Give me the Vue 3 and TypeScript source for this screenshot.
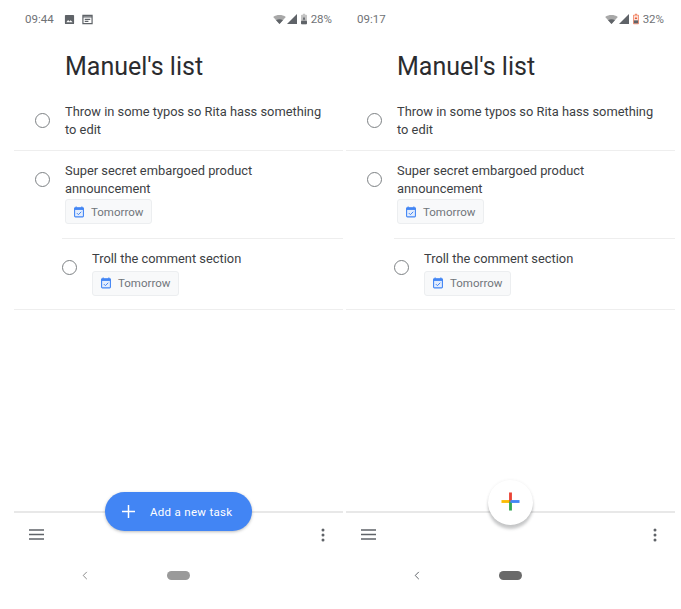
<script setup lang="ts">
interface Task {
  id: number
  lines: string[]
  due?: string
  sub?: boolean
}

interface Phone {
  id: number
  time: string
  percent: string
  notifications: boolean
  charging: boolean
  extended: boolean
  pillDark: boolean
}

const tasks: Task[] = [
  { id: 1, lines: ['Throw in some typos so Rita hass something', 'to edit'] },
  { id: 2, lines: ['Super secret embargoed product', 'announcement'], due: 'Tomorrow' },
  { id: 3, lines: ['Troll the comment section'], due: 'Tomorrow', sub: true },
]

const phones: Phone[] = [
  { id: 1, time: '09:44', percent: '28%', notifications: true, charging: false, extended: true, pillDark: false },
  { id: 2, time: '09:17', percent: '32%', notifications: false, charging: true, extended: false, pillDark: true },
]
</script>

<template>
  <div class="page">
    <section v-for="phone in phones" :key="phone.id" class="phone">
      <header class="status">
        <span class="time">{{ phone.time }}</span>
        <template v-if="phone.notifications">
          <svg class="note note-first" viewBox="0 0 12 12">
            <rect x="1" y="1" width="10" height="10" rx="1" fill="#5f6368" />
            <path d="M2.5 9l2-2.5 1.5 1.6 1.2-1.2L9.5 9z" fill="#fff" />
          </svg>
          <svg class="note" viewBox="0 0 12 12">
            <path d="M1 1.5h10v9H1z" fill="none" stroke="#5f6368" stroke-width="1.3" />
            <path d="M1 3.2h10M3 5.8h6M3 8h4" stroke="#5f6368" stroke-width="1.3" />
          </svg>
        </template>
        <span class="status-right">
          <svg class="wifi" viewBox="0 0 14 10">
            <path d="M0 2.2C4-.7 10-.7 14 2.2L7 10z" fill="#a8a8a8" />
            <path d="M3.2 5.9c2.3-1.5 5.3-1.5 7.6 0L7 10z" fill="#5f6368" />
          </svg>
          <svg class="signal" viewBox="0 0 11 11">
            <path d="M11 0v11H0z" fill="#5f6368" />
          </svg>
          <svg v-if="phone.charging" class="battery" viewBox="0 0 7 12">
            <path d="M2.2 0h2.6v1H6a1 1 0 0 1 1 1v9a1 1 0 0 1-1 1H1a1 1 0 0 1-1-1V2a1 1 0 0 1 1-1h1.2z" fill="#f28b6c" />
            <rect x="1" y="2" width="5" height="9" fill="#fbe0d8" />
            <rect x="1" y="7.6" width="5" height="3.4" fill="#5f6368" />
            <path d="M3.5 3.4 5 6H2z" fill="#e8552f" />
          </svg>
          <svg v-else class="battery" viewBox="0 0 7 12">
            <path d="M2.2 0h2.6v1H6a1 1 0 0 1 1 1v9a1 1 0 0 1-1 1H1a1 1 0 0 1-1-1V2a1 1 0 0 1 1-1h1.2z" fill="#c4c4c4" />
            <rect x="0" y="8" width="7" height="4" rx="1" fill="#5f6368" />
            <path d="M3.5 3 5 6.5H4v1H3v-1H2z" fill="#5f6368" />
          </svg>
          <span class="percent">{{ phone.percent }}</span>
        </span>
      </header>

      <h1 class="title">Manuel's list</h1>

      <ul class="tasks">
        <li v-for="task in tasks" :key="task.id" class="task" :class="{ 'task-sub': task.sub, 'task-dated': task.due }">
          <span class="check"></span>
          <div class="task-body">
            <p v-for="line in task.lines" :key="line" class="task-line">{{ line }}</p>
            <div v-if="task.due" class="chip">
              <svg class="chip-icon" viewBox="0 0 12 13">
                <path d="M2.6 0v1.6M9.4 0v1.6" stroke="#4285f4" stroke-width="1.4" />
                <rect x="0.7" y="1.4" width="10.6" height="10.9" rx="1" fill="#e3edfd" stroke="#4285f4" stroke-width="1.3" />
                <rect x="0.7" y="1.4" width="10.6" height="2.6" fill="#4285f4" />
                <path d="M3.4 7.8l1.9 1.9 3.4-3.5" fill="none" stroke="#4285f4" stroke-width="1.2" />
              </svg>
              <span>{{ task.due }}</span>
            </div>
          </div>
        </li>
      </ul>

      <footer class="bar">
        <button v-if="phone.extended" class="fab-wide">
          <svg class="fab-plus" viewBox="0 0 14 14">
            <path d="M7 0v14M0 7h14" stroke="#fff" stroke-width="1.6" />
          </svg>
          <span>Add a new task</span>
        </button>
        <button v-else class="fab-round">
          <svg class="fab-colors" viewBox="0 0 20 20">
            <path d="M10 10H0.5" stroke="#fbbc04" stroke-width="3" />
            <path d="M10 10V0.5" stroke="#ea4335" stroke-width="3" />
            <path d="M10 10v9.5" stroke="#34a853" stroke-width="3" />
            <path d="M10 10h9.5" stroke="#4285f4" stroke-width="3" />
          </svg>
        </button>
        <svg class="menu" viewBox="0 0 15 11">
          <path d="M0 1h15M0 5.5h15M0 10h15" stroke="#5f6368" stroke-width="1.4" />
        </svg>
        <svg class="dots" viewBox="0 0 4 14">
          <circle cx="2" cy="2" r="1.5" fill="#5f6368" />
          <circle cx="2" cy="7" r="1.5" fill="#5f6368" />
          <circle cx="2" cy="12" r="1.5" fill="#5f6368" />
        </svg>
      </footer>

      <nav class="nav">
        <svg class="back" viewBox="0 0 6 10">
          <path d="M5 1 1 5l4 4" fill="none" :stroke="phone.pillDark ? '#5f6368' : '#8a8a8a'" stroke-width="1.1" />
        </svg>
        <span class="pill" :class="{ 'pill-dark': phone.pillDark }"></span>
      </nav>
    </section>
  </div>
</template>

<style>
html,
body {
  margin: 0;
  background: #fff;
}
</style>

<style scoped>
.page {
  display: flex;
  gap: 3px;
  width: 681px;
  height: 609px;
  padding-left: 14px;
  box-sizing: border-box;
  overflow: hidden;
  background: #fff;
  font-family: Roboto, "Liberation Sans", sans-serif;
}

.phone {
  display: flex;
  flex-direction: column;
  width: 329px;
  height: 609px;
}

.status {
  display: flex;
  align-items: center;
  height: 38px;
  padding: 0 11px;
  box-sizing: border-box;
  color: #6f7276;
  font-size: 11.5px;
}

.note {
  width: 11px;
  height: 11px;
  margin-left: 7px;
}

.note-first {
  margin-left: 10px;
}

.status-right {
  display: flex;
  align-items: center;
  margin-left: auto;
}

.wifi {
  width: 13px;
  height: 9px;
}

.signal {
  width: 10px;
  height: 10px;
  margin-left: 1px;
}

.battery {
  width: 6px;
  height: 12px;
  margin-left: 4px;
}

.percent {
  margin-left: 4px;
}

.title {
  margin: 12px 0 0 51px;
  color: #2b2c2f;
  font-size: 25px;
  font-weight: 400;
  line-height: 34px;
}

.tasks {
  flex: 1;
  margin: 0;
  padding: 0;
  padding-top: 9px;
  list-style: none;
}

.task {
  display: flex;
  align-items: flex-start;
  padding: 10px 0 12px;
  border-bottom: 1px solid #eeeeee;
}

.task-dated {
  padding: 11px 0 14px;
}

.task-sub {
  position: relative;
  padding: 11px 0 13px 27px;
}

.task-sub::before {
  content: "";
  position: absolute;
  top: -1px;
  left: 0;
  width: 48px;
  height: 1px;
  background: #fff;
}

.check {
  flex: none;
  width: 13px;
  height: 13px;
  margin: 10px 15px 0 21px;
  border: 1.5px solid #7d8184;
  border-radius: 50%;
}

.task-body {
  flex: 1;
  min-width: 0;
}

.task-line {
  margin: 0;
  color: #3c4043;
  font-size: 12.85px;
  line-height: 17.5px;
}

.chip {
  display: inline-flex;
  align-items: center;
  gap: 7px;
  height: 25px;
  margin-top: 2px;
  padding: 0 8px;
  box-sizing: border-box;
  border: 1px solid #eceef0;
  border-radius: 3px;
  background: #f8f9fa;
  color: #70757a;
  font-size: 11.5px;
}

.task-sub .chip {
  margin-top: 3px;
}

.chip-icon {
  width: 10px;
  height: 12px;
}

.bar {
  position: relative;
  display: flex;
  align-items: center;
  justify-content: space-between;
  height: 45px;
  padding: 0 18px 0 15px;
  box-sizing: border-box;
  border-top: 2px solid #e8e8e8;
}

.menu {
  width: 15px;
  height: 11px;
}

.dots {
  width: 4px;
  height: 14px;
}

.fab-wide {
  position: absolute;
  top: -21px;
  left: 91px;
  display: flex;
  align-items: center;
  width: 147px;
  height: 39px;
  padding: 0 0 0 17px;
  border: none;
  border-radius: 20px;
  background: #4285f4;
  box-shadow: 0 1px 3px rgba(60, 64, 67, 0.35);
  color: #fff;
  font-family: inherit;
  font-size: 11.5px;
  font-weight: 400;
  letter-spacing: 0.3px;
}

.fab-plus {
  width: 13px;
  height: 13px;
  margin-right: 15px;
}

.fab-round {
  position: absolute;
  top: -33px;
  left: 142px;
  display: flex;
  align-items: center;
  justify-content: center;
  width: 45px;
  height: 45px;
  padding: 0 0 2px;
  border: none;
  border-radius: 50%;
  background: #fff;
  box-shadow: 0 4px 3px rgba(60, 64, 67, 0.28), 0 0 3px rgba(60, 64, 67, 0.08);
}

.fab-colors {
  width: 19px;
  height: 19px;
}

.nav {
  display: flex;
  align-items: center;
  height: 53px;
  padding: 0 0 15px 68px;
  box-sizing: border-box;
}

.back {
  width: 6px;
  height: 9px;
}

.pill {
  width: 23px;
  height: 9px;
  margin-left: 79px;
  border-radius: 5px;
  background: #9a9a9a;
}

.pill-dark {
  background: #6a6a6a;
}
</style>
